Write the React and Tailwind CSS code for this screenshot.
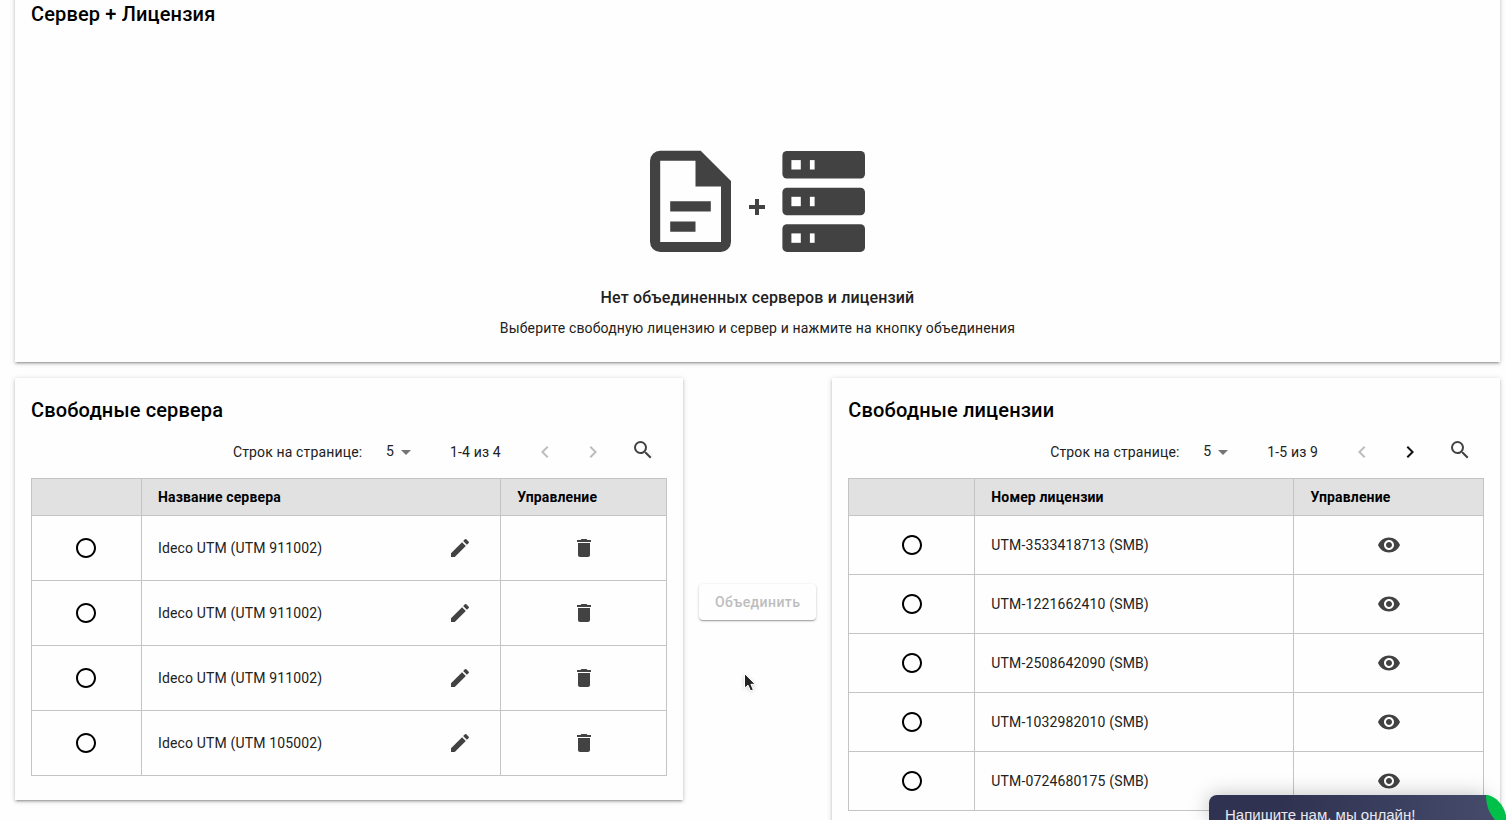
import React from "react";
import {
  MdSearch,
  MdEdit,
  MdDelete,
  MdVisibility,
  MdKeyboardArrowLeft,
  MdKeyboardArrowRight,
  MdArrowDropDown,
  MdRadioButtonUnchecked,
} from "react-icons/md";

const CARD =
  "shrink-0 bg-[#fefefe] shadow-[0_1px_5px_0_rgba(0,0,0,0.2),0_2px_2px_0_rgba(0,0,0,0.14),0_3px_1px_-2px_rgba(0,0,0,0.12)]";
const CELL = "flex items-center border-r border-b border-[#c4c4c4]";

const servers = ["Ideco UTM (UTM 911002)", "Ideco UTM (UTM 911002)", "Ideco UTM (UTM 911002)", "Ideco UTM (UTM 105002)"];
const licenses = [
  "UTM-3533418713 (SMB)",
  "UTM-1221662410 (SMB)",
  "UTM-2508642090 (SMB)",
  "UTM-1032982010 (SMB)",
  "UTM-0724680175 (SMB)",
];

function Title({ children }) {
  return <h2 className="text-[20px] leading-8 font-medium tracking-[0.0075em] text-black">{children}</h2>;
}

function Pagination({ range, hasNext }) {
  return (
    <div className="flex h-[52px] items-center justify-end text-sm tracking-[0.01071em] text-[#212121]">
      <span>Строк на странице:</span>
      <span className="ml-[23.7px] flex items-center pb-0.5">
        5
        <MdArrowDropDown className="mt-0.5 size-6 text-[#757575]" />
      </span>
      <span className="ml-8 w-[51px] whitespace-nowrap">{range}</span>
      <span className="ml-5 flex size-12 items-center justify-center">
        <MdKeyboardArrowLeft className="size-6 text-[#bdbdbd]" />
      </span>
      <span className="flex size-12 items-center justify-center">
        <MdKeyboardArrowRight className={hasNext ? "size-6 text-[#111]" : "size-6 text-[#bdbdbd]"} />
      </span>
      <span className="ml-0.5 flex size-12 items-center justify-center pb-1">
        <MdSearch className="size-6 text-[#424242]" />
      </span>
    </div>
  );
}

function HeaderRow({ cols, name }) {
  return (
    <div className={"grid h-[37px] bg-[#e1e1e1] text-sm font-bold tracking-[0.01071em] text-black " + cols}>
      <div className={CELL} />
      <div className={CELL + " px-4"}>{name}</div>
      <div className={CELL + " pr-4 pl-[16.3px]"}>Управление</div>
    </div>
  );
}

function Radio({ align = "" }) {
  return (
    <div className={CELL + " justify-center " + align}>
      <MdRadioButtonUnchecked className="size-6 text-black" />
    </div>
  );
}

function DocumentIcon() {
  return (
    <svg width="81" height="102" viewBox="0 0 81 102" fill="#424242">
      <path
        fillRule="evenodd"
        d="M10.2.8H50.7L81 31.1V91.7A10.2 10.2 0 0 1 70.8 101.9H10.2A10.2 10.2 0 0 1 0 91.7V11A10.2 10.2 0 0 1 10.2.8ZM10.2 10.8V91.9H71V36.5H45.5V10.8ZM20.2 51.2H60.8V61.5H20.2ZM20.2 71.5H45.5V81.7H20.2Z"
      />
    </svg>
  );
}

function ServerIcon() {
  return (
    <svg width="83" height="102" viewBox="0 0 83 102">
      {[1, 37.7, 74.3].map((y) => (
        <g key={y}>
          <rect x="0.4" y={y} width="82.6" height="27.6" rx="4.5" fill="#424242" />
          <rect x="9.4" y={y + 9.1} width="9.4" height="9.4" fill="#fff" />
          <rect x="27.9" y={y + 9.1} width="4.7" height="9.4" fill="#fff" />
        </g>
      ))}
    </svg>
  );
}

export default function App() {
  return (
    <div className="relative h-[820px] overflow-hidden bg-[#fefefe] pr-1.5 pl-[15px] font-['Roboto','Liberation_Sans',sans-serif]">
      <section className={CARD + " -mt-[18px] flex h-[380px] flex-col px-4 pt-4"}>
        <Title>Сервер + Лицензия</Title>
        <div className="mt-[120px] flex items-start justify-center">
          <DocumentIcon />
          <svg className="mt-[49px] ml-[18px]" width="16" height="16" viewBox="0 0 16 16" fill="#424242">
            <path d="M6 0h4v6h6v4h-6v6H6v-6H0V6h6z" />
          </svg>
          <div className="ml-[17px]">
            <ServerIcon />
          </div>
        </div>
        <p className="mt-8 text-center text-base leading-7 font-medium tracking-[0.00938em] text-[#212121]">
          Нет объединенных серверов и лицензий
        </p>
        <p className="mt-1.5 text-center text-sm leading-5 tracking-[0.01071em] text-[#212121]">
          Выберите свободную лицензию и сервер и нажмите на кнопку объединения
        </p>
      </section>

      <div className="mt-4 flex items-start">
        <section className={CARD + " h-[422px] w-[668px] px-4 pt-4"}>
          <Title>Свободные сервера</Title>
          <Pagination range="1-4 из 4" hasNext={false} />
          <div className="border-t border-l border-[#c4c4c4]">
            <HeaderRow cols="grid-cols-[110px_359px_166px]" name="Название сервера" />
            {servers.map((name, i) => (
              <div
                key={i}
                className="grid h-[65px] grid-cols-[110px_359px_166px] text-sm tracking-[0.01071em] text-[#212121]"
              >
                <Radio align="pr-px" />
                <div className={CELL + " justify-between pr-7 pl-4"}>
                  {name}
                  <MdEdit className="size-6 text-[#424242]" />
                </div>
                <div className={CELL + " justify-center"}>
                  <MdDelete className="size-6 text-[#424242]" />
                </div>
              </div>
            ))}
          </div>
        </section>

        <div className="flex h-[448px] w-[149.3px] shrink-0 items-center justify-center">
          <button className="h-9 w-[117px] rounded bg-[#fefefe] text-sm font-medium tracking-[0.02857em] text-[#bdbdbd] shadow-[0_1px_3px_0_rgba(0,0,0,0.2),0_1px_1px_0_rgba(0,0,0,0.14),0_2px_1px_-1px_rgba(0,0,0,0.12)]">
            Объединить
          </button>
        </div>

        <section className={CARD + " h-[460px] w-[668px] px-4 pt-4"}>
          <Title>Свободные лицензии</Title>
          <Pagination range="1-5 из 9" hasNext />
          <div className="border-t border-l border-[#c4c4c4]">
            <HeaderRow cols="grid-cols-[126px_319px_190px]" name="Номер лицензии" />
            {licenses.map((name) => (
              <div
                key={name}
                className="grid h-[59px] grid-cols-[126px_319px_190px] text-sm tracking-[0.01071em] text-[#212121]"
              >
                <Radio />
                <div className={CELL + " px-4"}>{name}</div>
                <div className={CELL + " justify-center"}>
                  <MdVisibility className="size-6 text-[#424242]" />
                </div>
              </div>
            ))}
          </div>
        </section>
      </div>

      <svg className="absolute top-[672px] left-[743px] drop-shadow-sm" width="14" height="21" viewBox="0 0 14 21">
        <path
          d="M1.5 1.5V16.2L5 13.2L7.6 19L10.3 17.7L7.9 12.3H12.2Z"
          fill="#222"
          stroke="#fff"
          strokeWidth="1"
        />
      </svg>

      <div className="absolute top-[795px] right-0 flex h-[25px] w-[297px]">
        <div className="h-full w-[277px] rounded-tl-lg bg-gradient-to-r from-[#2f3250] from-25% to-[#454a6b] pt-[11px] pl-4 font-['Liberation_Sans',sans-serif] text-[15px] leading-[18px] whitespace-nowrap text-[#e8e8ee] shadow-[0_0_20px_rgba(0,0,0,0.25)]">
          Напишите нам, мы онлайн!
        </div>
        <svg className="relative" width="20" height="25" viewBox="0 0 20 25">
          <path d="M0 0V25H11V10Z" fill="#454a6b" />
          <path d="M0 0H2C10 2 17 9 20 20V25H9C3 18 0 10 0 0Z" fill="#00c04a" />
        </svg>
      </div>
    </div>
  );
}
